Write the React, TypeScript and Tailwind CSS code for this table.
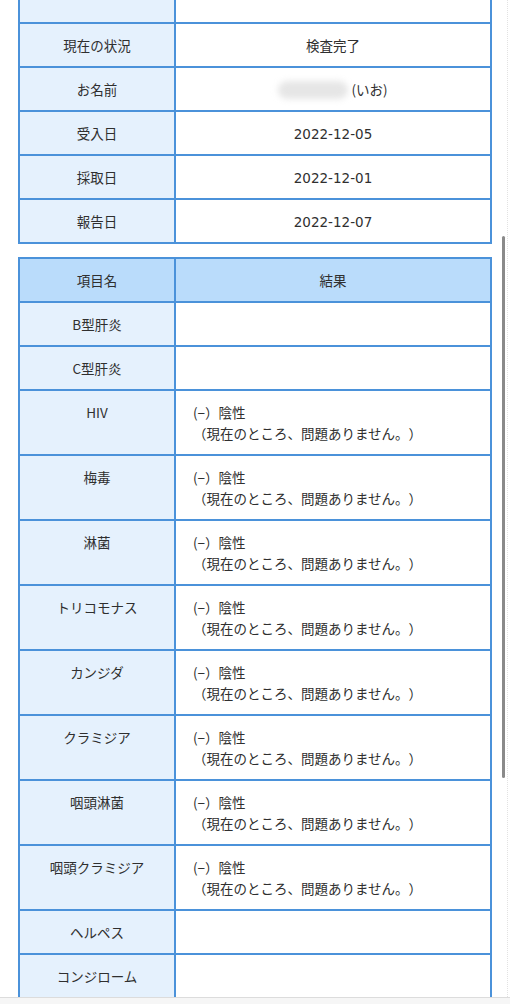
import React from "react";

const border = "border-[#4b92da]";

type Row = { label: string; value?: React.ReactNode };

const infoRows: Row[] = [
  { label: "現在の状況", value: "検査完了" },
  {
    label: "お名前",
    value: (
      <span className="inline-flex items-center h-[21px] align-top">
        <span className="inline-block w-[70px] h-[18px] rounded-full bg-[#e6e6e6] blur-[3px] mr-[3px]" />
        (いお)
      </span>
    ),
  },
  { label: "受入日", value: <span className="font-['DejaVu_Sans'] text-[13.5px]">2022-12-05</span> },
  { label: "採取日", value: <span className="font-['DejaVu_Sans'] text-[13.5px]">2022-12-01</span> },
  { label: "報告日", value: <span className="font-['DejaVu_Sans'] text-[13.5px]">2022-12-07</span> },
];

const negative = (
  <>
    <div>(−）陰性</div>
    <div>（現在のところ、問題ありません。）</div>
  </>
);

const resultRows: Row[] = [
  { label: "B型肝炎" },
  { label: "C型肝炎" },
  { label: "HIV", value: negative },
  { label: "梅毒", value: negative },
  { label: "淋菌", value: negative },
  { label: "トリコモナス", value: negative },
  { label: "カンジダ", value: negative },
  { label: "クラミジア", value: negative },
  { label: "咽頭淋菌", value: negative },
  { label: "咽頭クラミジア", value: negative },
  { label: "ヘルペス" },
  { label: "コンジローム" },
];

const App = () => {
  return (
    <div
      className="relative w-[510px] h-[1004px] overflow-hidden bg-white text-[#2f2f2f] text-[13.5px] leading-[21px] [text-spacing-trim:space-all]"
      style={{ fontFamily: '"Noto Sans CJK JP", "Noto Sans", sans-serif' }}
    >
      <div className="px-[18px]">
        {/* 受付情報 */}
        <div className={`border-2 border-t-0 ${border}`}>
          <div className="flex h-[22px]">
            <div className={`w-[156px] bg-[#e5f1fd] border-r-2 ${border}`} />
            <div className="flex-1" />
          </div>
          {infoRows.map((row) => (
            <div key={row.label} className={`flex h-[44px] border-t-2 ${border}`}>
              <div className={`w-[156px] shrink-0 bg-[#e5f1fd] border-r-2 ${border} text-center pt-[11px]`}>
                {row.label}
              </div>
              <div className="flex-1 text-center pt-[11px]">{row.value}</div>
            </div>
          ))}
        </div>

        {/* 検査結果 */}
        <div className={`mt-[13px] border-2 ${border}`}>
          <div className="flex h-[42px] bg-[#badcfb]">
            <div className={`w-[156px] shrink-0 border-r-2 ${border} text-center pt-[11px]`}>
              項目名
            </div>
            <div className="flex-1 text-center pt-[11px]">結果</div>
          </div>
          {resultRows.map((row) => (
            <div
              key={row.label}
              className={`flex border-t-2 ${border} ${row.value ? "h-[65px]" : "h-[44px]"}`}
            >
              <div className={`w-[156px] shrink-0 bg-[#e5f1fd] border-r-2 ${border} text-center pt-[11px]`}>
                {row.label}
              </div>
              <div className="flex-1 pl-[17px] pt-[11px]">{row.value}</div>
            </div>
          ))}
        </div>
      </div>

      {/* bottom toolbar edge */}
      <div className="absolute left-0 right-0 bottom-0 h-[7px] bg-[#f6f6f6] border-t border-[#dcdcdc]" />

      {/* overlay scrollbar */}
      <div className="absolute left-[502px] top-[236px] w-[3px] h-[542px] rounded-full bg-[#8a8a8a]" />
      <div className="absolute right-[2px] top-0 bottom-[7px] border-r border-dotted border-[#e2e2e2]" />
    </div>
  );
};

export default App;
